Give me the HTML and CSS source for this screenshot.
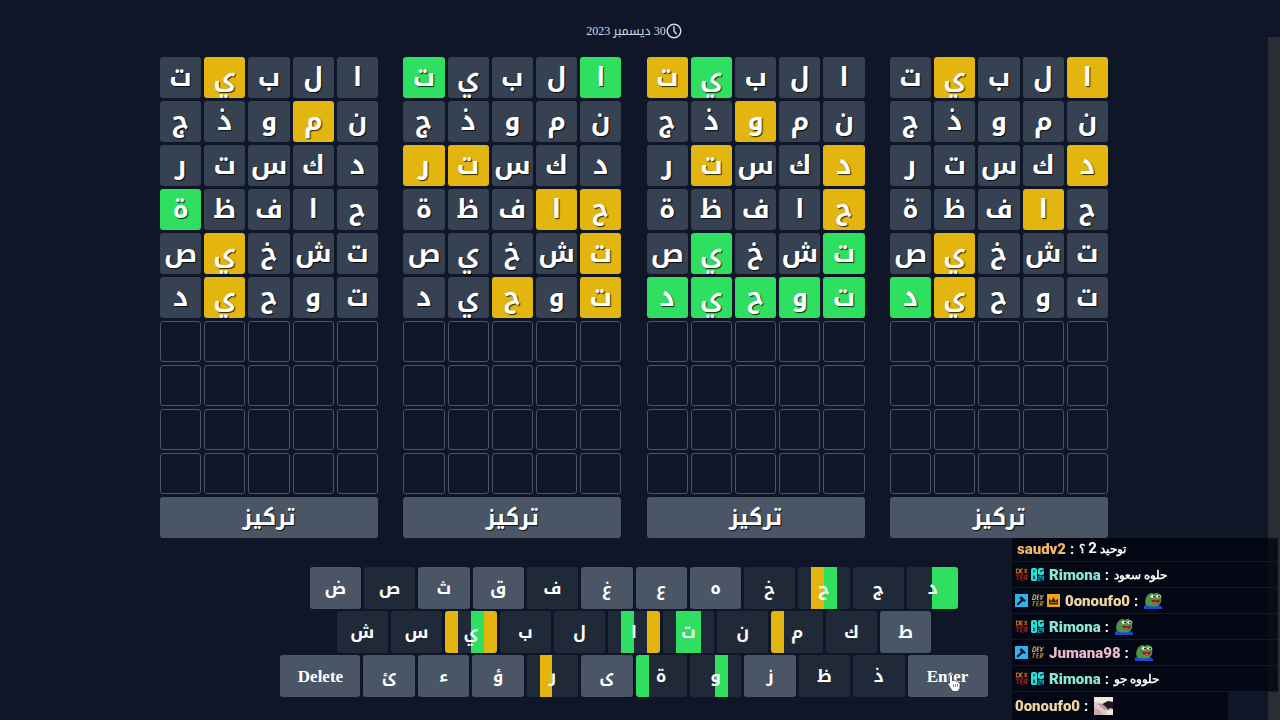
FILE: index.html
```html
<!DOCTYPE html>
<html lang="ar">
<head>
<meta charset="utf-8">
<meta name="viewport" content="width=device-width, initial-scale=1">
<title>30 ديسمبر 2023</title>
<link rel="stylesheet" href="styles.css">
</head>
<body>
<svg class="defs" width="0" height="0" aria-hidden="true">
  <symbol id="badge-dexter-red" viewBox="0 0 12 13">
    <path d="M1 1h2l1 1v2l-1 1H1zM5 1h2.500M5 3h2M5 5h2.500M5 1v4M9 1l2.500 4M11.500 1L9 5" fill="none" stroke="#b0702a" stroke-width="1.200"/>
    <path d="M0 7h4M2 7v5M5 7h3M5 9.500h3M5 12h3M5 7v5M9.500 7v5M9.500 7h2v2.500h-2l2 2.500" fill="none" stroke="#8c1420" stroke-width="1.600"/>
  </symbol>
  <symbol id="badge-og" viewBox="0 0 14 14">
    <rect width="6.500" height="14" rx="2" fill="#26e0d8"/>
    <rect x="7.500" width="6.500" height="7.500" rx="2" fill="#26e0d8"/>
    <path d="M2.500 2.500h1.500v2H2.500zM2.500 8h1.500v4H2.500zM10 2.200h4v1h-2.500v1.500H10z" fill="#06303c"/>
    <path d="M8 9h2.500v2H8v2.500h2.500M12 9v4.500M12 9h1.500v4.500" fill="none" stroke="#1a98a8" stroke-width="1.200"/>
  </symbol>
  <symbol id="badge-mod" viewBox="0 0 13 13">
    <rect width="13" height="13" fill="#2cb4f0"/>
    <path d="M6 2l5 4.500-1.500 1.500-1.500-1-5 4.500-1.500-1.500L6 6 4.500 4z" fill="#071326"/>
  </symbol>
  <symbol id="badge-dexter" viewBox="0 0 12 13">
    <path d="M2 1h1.500l1 1-.5 2.500-1 1H1zM5.500 5.500l1-4.500H8M6 3.300h1.500M5.500 5.500H7M9 1l1.500 4.500M12 1L8.500 5.500" fill="none" stroke="#c0a864" stroke-width="1.100"/>
    <path d="M1 7.500h3M2.500 7.500l-1 4.500M5.500 7.500H7.500M5.500 9.700h1.500M5 12h2M5.500 7.500L5 12M8.500 12l1-4.500h2l-.5 2.300H9l1.500 2.200" fill="none" stroke="#9c7428" stroke-width="1.200"/>
  </symbol>
  <symbol id="badge-crown" viewBox="0 0 13 13">
    <rect width="13" height="13" fill="#f4a41c"/>
    <path d="M2 10.500V4.500l2.500 2.500 2-4 2 4L11 4.500v6z" fill="#3a2408"/>
    <path d="M3 8.500h7" stroke="#f4a41c" stroke-width=".6"/>
  </symbol>
  <symbol id="emote-frog" viewBox="0 0 19 18">
    <path d="M0 17v-3l3-2 12 1 3 2v2z" fill="#1c48d8"/>
    <path d="M2 13C0 9 2 3 6 1.500c2-1 3 0 4 .5 1-1.500 4-1.500 5.500 0 2 .5 2.500 3 1.500 5 1 4-2 7-6 7.500-4 0-7 0-9-1.500z" fill="#4f9440"/>
    <ellipse cx="9" cy="4.300" rx="2.500" ry="1.600" fill="#eef3e8"/>
    <ellipse cx="14.500" cy="4.300" rx="2.300" ry="1.600" fill="#eef3e8"/>
    <circle cx="10" cy="4.400" r="1" fill="#111"/>
    <circle cx="15" cy="4.400" r="1" fill="#111"/>
    <path d="M7 7.500c3 1 6 1 9 0 0 2.500-2 4-4 4S7.500 10 7 7.500z" fill="#8c1c28"/>
    <path d="M9.500 10.500c1-1 3-1 4 0-1 1-3 1-4 0z" fill="#e06078"/>
  </symbol>
  <symbol id="emote-photo" viewBox="0 0 19 18">
    <rect width="19" height="18" fill="#dccbc6"/>
    <path d="M0 0h19v4L9 6 0 5z" fill="#f0e8dc"/>
    <path d="M10 6l4-2 5 1v7l-3-1-2 2-4-3-3-1z" fill="#231a20"/>
    <path d="M4 7c3-1 6 1 8 3l3 3c-2 1-5-1-7-2z" fill="#b8949c"/>
    <path d="M0 11l5 2 4 5H0z" fill="#c8a8a8"/>
    <path d="M12 14l7-1v5h-6z" fill="#eee4e0"/>
  </symbol>
</svg>

<div class="page">
  <main class="game">
    <header class="date">
      <time datetime="2023-12-30" dir="rtl">30 ديسمبر 2023</time>
      <svg class="clock" viewBox="0 0 16 16" aria-hidden="true"><circle cx="8" cy="8" r="6.800"/><path d="M8 3.800V8l2.200 2.800"/></svg>
    </header>
    <section class="boards" id="boards"></section>
    <section class="keyboard" id="keyboard" aria-label="لوحة المفاتيح"></section>
  </main>
  <div class="scrollbar"><div class="thumb"></div></div>
</div>

<svg class="cursor" viewBox="0 0 14 20" aria-hidden="true"><path d="M4 1.500c1 0 1.500.6 1.500 1.500v5l.6-.8c.7-.4 1.500 0 1.700.8.8-.6 1.700-.2 1.900.7.9-.4 1.900.1 2 1.100.7-.2 1.300.3 1.300 1.100v3c0 2.600-1.500 4.600-4 4.600H7.500c-1.500 0-2.500-.7-3.200-2L1 11.500c-.5-1 .6-2 1.500-1.300V3c0-.9.600-1.500 1.500-1.500z" fill="#fff" stroke="#222a36" stroke-width=".7"/><path d="M6.500 11v3M8.500 11v3M10.500 11v3" stroke="#444c58" stroke-width=".6"/></svg>

<aside class="chat" dir="ltr">
  <p class="message first"><b class="user amber">saudv2</b><span class="colon">:</span><bdi dir="rtl">توحيد <span class="digit">2</span> ؟</bdi></p>
  <p class="message"><svg class="badge"><use href="#badge-dexter-red"/></svg><svg class="badge"><use href="#badge-og"/></svg><b class="user mint">Rimona</b><span class="colon">:</span><bdi dir="rtl">حلوه سعود</bdi></p>
  <p class="message"><svg class="badge"><use href="#badge-mod"/></svg><svg class="badge"><use href="#badge-dexter"/></svg><svg class="badge"><use href="#badge-crown"/></svg><b class="user sand">0onoufo0</b><span class="colon">:</span><svg class="emote"><use href="#emote-frog"/></svg></p>
  <p class="message"><svg class="badge"><use href="#badge-dexter-red"/></svg><svg class="badge"><use href="#badge-og"/></svg><b class="user mint">Rimona</b><span class="colon">:</span><svg class="emote"><use href="#emote-frog"/></svg></p>
  <p class="message"><svg class="badge"><use href="#badge-mod"/></svg><svg class="badge"><use href="#badge-dexter"/></svg><b class="user pink">Jumana98</b><span class="colon">:</span><svg class="emote"><use href="#emote-frog"/></svg></p>
  <p class="message"><svg class="badge"><use href="#badge-dexter-red"/></svg><svg class="badge"><use href="#badge-og"/></svg><b class="user mint">Rimona</b><span class="colon">:</span><bdi dir="rtl">حلووه جو</bdi></p>
  <p class="message short"><b class="user sand">0onoufo0</b><span class="colon">:</span><svg class="emote"><use href="#emote-photo"/></svg></p>
</aside>
<script src="game.js"></script>
</body>
</html>
```
FILE: styles.css
```css
* { box-sizing: border-box; }

body {
  margin: 0;
  background: #0f1627;
  color: #fff;
  font-family: "Liberation Serif", "Noto Kufi Arabic", serif;
  overflow: hidden;
}

.defs { position: absolute; }

.page {
  display: flex;
  min-height: 100vh;
}

.game {
  flex: 1;
  display: flex;
  flex-direction: column;
  align-items: center;
}

.date {
  display: flex;
  align-items: center;
  justify-content: center;
  height: 57px;
  padding-top: 4px;
  color: #d5d9e0;
  font-size: 12px;
  line-height: 16px;
}

.clock {
  width: 16px;
  height: 16px;
  fill: none;
  stroke: currentColor;
  stroke-width: 1.4;
  stroke-linecap: round;
}

.boards {
  display: flex;
  justify-content: space-between;
  width: 100%;
  max-width: 948px;
}

.board {
  display: flex;
  flex-direction: column;
  gap: 3px;
  width: 23%;
}

.grid {
  display: grid;
  grid-template-columns: repeat(5, 1fr);
  gap: 3px;
  direction: rtl;
}

.cell {
  display: flex;
  align-items: center;
  justify-content: center;
  height: 41px;
  padding-top: 1px;
  border-radius: 3px;
  background: #364152;
  font: bold 26px/40px "Noto Kufi Arabic", sans-serif;
  text-shadow: 1px 1px 1px rgba(0, 0, 0, .8);
}

.cell.empty {
  background: none;
  border: 1px solid #4a5463;
}

.cell.near { background: #e2b60f; }
.cell.hit { background: #2fe060; }

button {
  margin: 0;
  padding: 0;
  border: 0;
  border-radius: 3px;
  background: #4a5565;
  color: #fff;
}

.focus {
  height: 41px;
  padding-top: 2px;
  font: bold 22px/39px "Noto Kufi Arabic", sans-serif;
  text-shadow: 1px 1px 1px rgba(0, 0, 0, .8);
}

.keyboard {
  display: flex;
  flex-direction: column;
  align-items: center;
  gap: 2px;
  width: 100%;
  margin-top: 29px;
}

.keys {
  display: flex;
  gap: 3px;
  width: 100%;
  justify-content: center;
}

.keys.top { max-width: 649px; }
.keys.middle { max-width: 595px; }
.keys.bottom { max-width: 707px; }

.key {
  flex: 1;
  height: 42px;
  padding-top: 2px;
  font: bold 17px/40px "Liberation Serif", "Noto Kufi Arabic", serif;
}

.key.wide { flex: 0 0 80px; }

.key.used {
  --a: #1f2938;
  --b: #1f2938;
  --c: #1f2938;
  --d: #1f2938;
  background: linear-gradient(90deg, var(--a) 25%, var(--b) 25% 50%, var(--c) 50% 75%, var(--d) 75%);
}

.key.a-near { --a: #e2b60f; }
.key.b-near { --b: #e2b60f; }
.key.d-near { --d: #e2b60f; }
.key.a-hit { --a: #2fe060; }
.key.b-hit { --b: #2fe060; }
.key.c-hit { --c: #2fe060; }
.key.d-hit { --d: #2fe060; }

.scrollbar {
  width: 12px;
  padding-top: 37px;
  display: flex;
}

.thumb {
  flex: 1;
  background: #2b2d36;
}

.cursor {
  position: absolute;
  left: calc(50% + 307px);
  top: 673px;
  width: 14px;
  height: 20px;
}

.chat {
  position: fixed;
  right: 2px;
  bottom: 0;
  width: 266px;
  font: bold 15px/24px Roboto, "Liberation Sans", sans-serif;
}

.message {
  display: flex;
  align-items: center;
  gap: 3px;
  height: 26px;
  margin: 0;
  padding-left: 3px;
  border-bottom: 1px solid #141a2a;
  background: rgba(0, 3, 15, .75);
}

.message.first {
  height: 24px;
  padding: 0 0 2px 5px;
}

.message.short {
  width: 216px;
  height: 28px;
  border-bottom: 0;
}

.message bdi {
  margin-left: 1px;
  font-size: 12px;
}

.digit { font-size: 15px; }

.colon { margin: 0 1px; }

.badge {
  width: 13px;
  height: 13px;
}

.badge + .user { margin-left: 2px; }

.emote {
  width: 19px;
  height: 18px;
  margin-left: 2px;
}

.amber { color: #f0b860; }
.mint { color: #8ce8d0; }
.sand { color: #f0d4a0; }
.pink { color: #ecb8cc; }
```
FILE: game.js
```js
const guesses = ["البيت", "نموذج", "دكستر", "حافظة", "تشخيص", "توحيد"];

// One mark per letter, in reading order: "-" absent, "n" present, "h" correct.
const boards = [
  ["---n-", "-n---", "-----", "----h", "---n-", "---n-"],
  ["h---h", "-----", "---nn", "nn---", "n----", "n-n--"],
  ["---hn", "--n--", "n--n-", "n----", "h--h-", "hhhhh"],
  ["n--n-", "-----", "n----", "-n---", "---n-", "---nh"],
];
const rows = 10;
const markClass = { n: " near", h: " hit", "-": "" };

document.getElementById("boards").innerHTML = boards.map((marks) => {
  let cells = "";
  for (let r = 0; r < rows; r++) {
    for (let c = 0; c < 5; c++) {
      cells += guesses[r]
        ? `<div class="cell${markClass[marks[r][c]]}">${guesses[r][c]}</div>`
        : `<div class="cell empty"></div>`;
    }
  }
  return `<div class="board"><div class="grid">${cells}</div><button class="focus" type="button">تركيز</button></div>`;
}).join("");

const layout = { top: "ضصثقفغعەخحجد", middle: "شسيبلاتنمكط", bottom: "ئءؤرىةوزظذ" };
const keyMarks = {
  "ي": "a-near c-hit d-near", "ا": "b-hit d-near", "ت": "b-hit c-hit",
  "م": "a-near", "ر": "b-near", "ة": "a-hit", "و": "c-hit",
  "ح": "b-near c-hit", "د": "c-hit d-hit",
};
const used = new Set(guesses.join(""));

document.getElementById("keyboard").innerHTML = Object.entries(layout).map(([name, letters]) => {
  let keys = [...letters].map((ch) => {
    const state = used.has(ch) ? ` used ${keyMarks[ch] || ""}` : "";
    return `<button class="key${state}" type="button">${ch}</button>`;
  }).join("");
  if (name === "bottom") {
    keys = `<button class="key wide" type="button">Delete</button>${keys}<button class="key wide" type="button">Enter</button>`;
  }
  return `<div class="keys ${name}">${keys}</div>`;
}).join("");
```
